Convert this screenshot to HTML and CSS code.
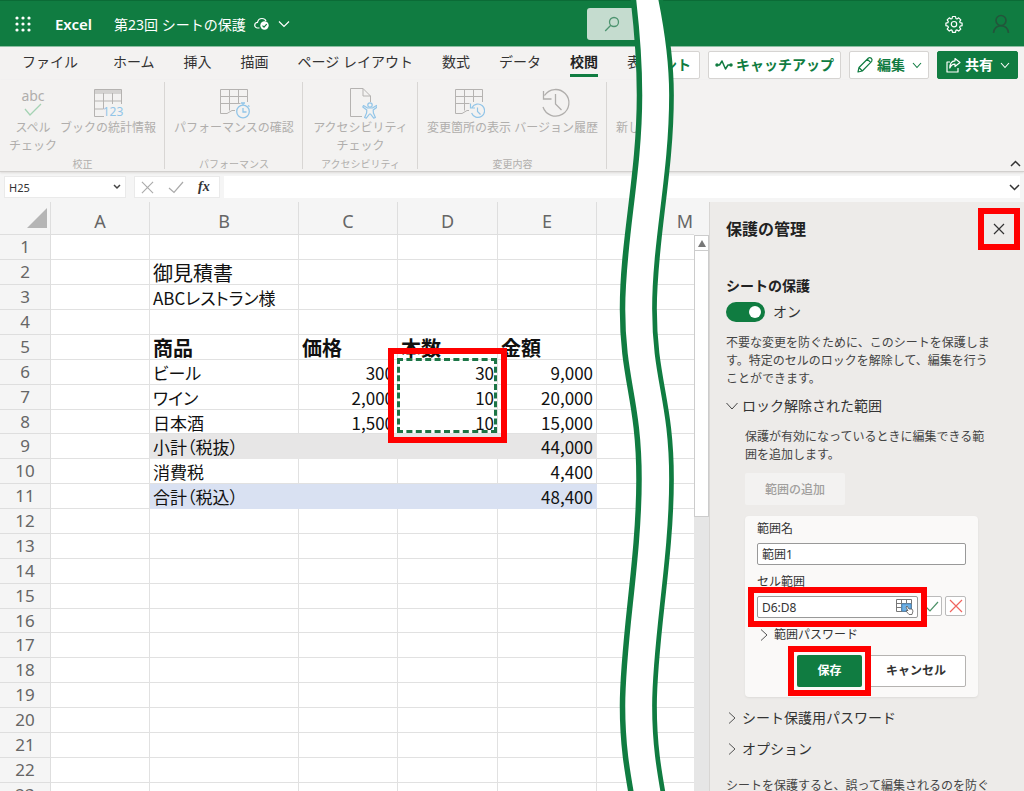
FILE: index.html
```html
<!DOCTYPE html>
<html lang="ja">
<head>
<meta charset="utf-8">
<title>第23回 シートの保護 - Excel</title>
<link rel="stylesheet" href="styles.css">
</head>
<body>
<div class="app">
  <header class="topbar">
    <div class="brand">
      <button class="plain" aria-label="アプリ起動ツール">
        <svg width="16" height="16" viewBox="0 0 16 16" fill="#fff"><circle cx="2" cy="2" r="1.6"/><circle cx="8" cy="2" r="1.6"/><circle cx="14" cy="2" r="1.6"/><circle cx="2" cy="8" r="1.6"/><circle cx="8" cy="8" r="1.6"/><circle cx="14" cy="8" r="1.6"/><circle cx="2" cy="14" r="1.6"/><circle cx="8" cy="14" r="1.6"/><circle cx="14" cy="14" r="1.6"/></svg>
      </button>
      <span class="appname">Excel</span>
      <button class="plain doc">
        <span>第23回 シートの保護</span>
        <svg width="16" height="14" viewBox="0 0 16 14" fill="none" stroke="#fff" stroke-width="1.2"><path d="M5.500 11H3.500a2.800 2.800 0 0 1 0-5.600C4 3 5.600 1.500 8 1.500c2 0 3.400 1 4 2.500"/><circle cx="10.500" cy="8.500" r="4.200" fill="#fff" stroke="none"/><path d="M8.500 8.600l1.500 1.500 2.700-3" stroke="#107c41"/></svg>
        <svg width="12" height="8" viewBox="0 0 12 8" fill="none" stroke="#fff" stroke-width="1.200"><path d="M1 1.500l5 5 5-5"/></svg>
      </button>
    </div>
    <button class="search" aria-label="検索">
      <svg width="16" height="16" viewBox="0 0 16 16" fill="none" stroke="#4e9470" stroke-width="1.300"><circle cx="10" cy="6" r="4.500"/><path d="M6.800 9.300L1.200 15"/></svg>
    </button>
    <div class="account">
      <button class="plain" aria-label="設定">
        <svg width="18" height="18" viewBox="0 0 18 18" fill="none" stroke="#fff" stroke-width="1.200" stroke-linejoin="round"><path d="M7.500 1.500h3l.4 2 1.100.5 1.700-1.200 2.100 2.100-1.100 1.700.4 1.100 2 .4v2.600l-2 .5-.5 1.100 1.200 1.700-2.100 2.100-1.700-1.200-1.100.5-.4 2h-3l-.4-2-1.100-.5-1.700 1.200-2.100-2.100 1.200-1.700-.5-1.100-2-.5V8.100l2-.4.4-1.100-1.100-1.700 2.100-2.100L6 4l1.100-.5z"/><circle cx="9" cy="9.200" r="2.700"/></svg>
      </button>
      <button class="plain" aria-label="アカウント">
        <svg width="18" height="20" viewBox="0 0 18 20" fill="none" stroke="#23553b" stroke-width="1.600"><circle cx="9" cy="6.500" r="5"/><path d="M1.500 19c.5-4.500 3.500-7.300 7.500-7.300s7 2.800 7.500 7.300"/></svg>
      </button>
    </div>
  </header>

  <div class="tabrow">
    <nav class="tabs">
      <a href="#">ファイル</a><a href="#">ホーム</a><a href="#">挿入</a><a href="#">描画</a><a href="#">ページ レイアウト</a><a href="#">数式</a><a href="#">データ</a><a href="#" class="on">校閲</a><a href="#">表</a>
    </nav>
    <div class="actions">
      <button class="act comment">ント</button>
      <button class="act">
        <svg width="18" height="12" viewBox="0 0 18 12" fill="none" stroke="#107c41" stroke-width="1.500" stroke-linejoin="round"><path d="M2 6h2.500L7 2l3.500 8L13 6h3"/><circle cx="2" cy="6" r="1" fill="#107c41"/><circle cx="16" cy="6" r="1" fill="#107c41"/></svg>
        <span>キャッチアップ</span>
      </button>
      <button class="act">
        <svg width="18" height="18" viewBox="0 0 18 18" fill="none" stroke="#107c41" stroke-width="1.200" stroke-linejoin="round"><path d="M2 16l1-4.500L12.500 2c1.800-1.300 4.500 1 3.200 3.300L6.300 15zM11.300 3.200l3.300 3.300M3 11.500l3.300 3.500"/></svg>
        <span>編集</span>
        <svg width="10" height="7" viewBox="0 0 10 7" fill="none" stroke="#107c41" stroke-width="1.100"><path d="M1 1l4 4.500L9 1"/></svg>
      </button>
      <button class="act share">
        <svg width="17" height="16" viewBox="0 0 17 16" fill="none" stroke="#fff" stroke-width="1.200" stroke-linejoin="round"><path d="M5 5H2v10h11v-4M10 1.500l5 4-5 4V7.200C7.500 7 6 8.500 4.800 11c0-4 2-7 5.200-7.200z"/></svg>
        <span>共有</span>
        <svg width="10" height="7" viewBox="0 0 10 7" fill="none" stroke="#fff" stroke-width="1.100"><path d="M1 1l4 4.500L9 1"/></svg>
      </button>
    </div>
  </div>

  <div class="ribbon">
    <section class="group g1">
      <div class="tools">
        <button class="tool" disabled>
          <svg width="32" height="32" viewBox="0 0 32 32"><text x="16" y="14" text-anchor="middle" class="abc">abc</text><path d="M8 22l5 6L24 17" fill="none" stroke="#a5d3b4" stroke-width="1.300"/></svg>
          <span>スペル<br>チェック</span>
        </button>
        <button class="tool" disabled>
          <svg width="32" height="32" viewBox="0 0 32 32" fill="none" stroke="#b5b3b1"><path d="M12 29.500H2.500v-27h27V17M2.500 6h27M2.500 14h27M2.500 22h9M11.500 6v16M20.500 6v11M2.500 4h27"/><text x="21" y="29" text-anchor="middle" class="n123">123</text></svg>
          <span>ブックの統計情報</span>
        </button>
      </div>
      <h3>校正</h3>
    </section>
    <section class="group g2">
      <div class="tools">
        <button class="tool" disabled>
          <svg width="32" height="32" viewBox="0 0 32 32" fill="none" stroke="#b5b3b1"><path d="M29.500 15V2.500h-27v24H9l5-3h3M2.500 9.500h27M2.500 16.500h20M11.500 2.500v21M20.500 2.500V17"/><g stroke="#92c5e8" stroke-width="1.300"><circle cx="25" cy="24.500" r="6.300"/><path d="M25 21v4h3.500M23 16h4M25 16v2M30 18.500l1.500 1"/></g></svg>
          <span>パフォーマンスの確認</span>
        </button>
      </div>
      <h3>パフォーマンス</h3>
    </section>
    <section class="group g3">
      <div class="tools">
        <button class="tool" disabled>
          <svg width="32" height="32" viewBox="0 0 32 32" fill="none" stroke="#b5b3b1"><path d="M17 29.500H5.500v-28H18l7.500 7.500v6M18 1.500V9h7.500"/><g stroke="#92c5e8" stroke-width="1.200" stroke-linejoin="round"><circle cx="25" cy="18" r="2.200"/><path d="M18.500 18.500l4 2.500h5l4-2.500.7 1.500-4 3 .2 3 2 4.500-1.700.7L25.500 27h-1l-3.200 4.200-1.700-.7 2-4.500.2-3-4-3z"/></g></svg>
          <span>アクセシビリティ<br>チェック</span>
        </button>
      </div>
      <h3>アクセシビリティ</h3>
    </section>
    <section class="group g4">
      <div class="tools">
        <button class="tool" disabled>
          <svg width="32" height="32" viewBox="0 0 32 32" fill="none" stroke="#b5b3b1"><path d="M29.500 15V2.500h-27v24H9l5-3h2M2.500 9.500h27M2.500 16.500h14M11.500 2.500v21M20.500 2.500V15"/><g stroke="#92c5e8" stroke-width="1.200"><path d="M19 20.500a6.700 6.700 0 1 1-.4 5.500M17.500 16.500v4.500H22M24.500 20.500v4l3 3"/></g></svg>
          <span>変更箇所の表示</span>
        </button>
        <button class="tool" disabled>
          <svg width="32" height="32" viewBox="0 0 32 32" fill="none" stroke="#b0aeac" stroke-width="1.300"><path d="M4.500 8.500A13.300 13.300 0 1 1 3 20M3.500 4v8h8M15.500 7v10l6 6"/></svg>
          <span>バージョン履歴</span>
        </button>
      </div>
      <h3>変更内容</h3>
    </section>
    <section class="group g5">
      <div class="tools"><button class="tool" disabled><svg width="24" height="32" viewBox="0 0 24 32"></svg><span>新し</span></button></div>
    </section>
    <button class="plain collapse" aria-label="リボンを折りたたむ">
      <svg width="11" height="7" viewBox="0 0 11 7" fill="none" stroke="#333" stroke-width="1.500"><path d="M1 6l4.500-4.500L10 6"/></svg>
    </button>
  </div>

  <div class="formulabar">
    <button class="namebox"><span>H25</span>
      <svg width="8" height="6" viewBox="0 0 8 6" fill="none" stroke="#444" stroke-width="1.500"><path d="M1 1l3 3 3-3"/></svg>
    </button>
    <div class="fxtools">
      <svg width="13" height="13" viewBox="0 0 14 14" fill="none" stroke="#aaa" stroke-width="1.200"><path d="M1 1l12 12M13 1L1 13"/></svg>
      <svg width="16" height="14" viewBox="0 0 16 14" fill="none" stroke="#aaa" stroke-width="1.200"><path d="M1 8l5 4.500L15 2"/></svg>
      <span class="fx">fx</span>
    </div>
    <div class="fxinput">
      <input type="text" aria-label="数式バー">
      <svg width="11" height="7" viewBox="0 0 11 7" fill="none" stroke="#333" stroke-width="1.500"><path d="M1 1l4.500 4.500L10 1"/></svg>
    </div>
  </div>

  <main class="work">
    <div class="sheet">
      <table class="grid">
        <colgroup><col class="w50"><col class="w99"><col class="w149"><col class="w99"><col class="w100"><col class="w99"><col></colgroup>
        <thead><tr><th class="corner"><svg width="20" height="20" viewBox="0 0 20 20"><path d="M20 0v20H0z" fill="#b5b5b5"/></svg></th><th>A</th><th>B</th><th>C</th><th>D</th><th>E</th><th class="last">M</th></tr></thead>
        <tbody>
          <tr><th>1</th><td></td><td></td><td></td><td></td><td></td><td></td></tr>
          <tr><th>2</th><td></td><td class="big">御見積書</td><td></td><td></td><td></td><td></td></tr>
          <tr><th>3</th><td></td><td>ABCレストラン様</td><td></td><td></td><td></td><td></td></tr>
          <tr><th>4</th><td></td><td></td><td></td><td></td><td></td><td></td></tr>
          <tr class="heads"><th>5</th><td></td><td>商品</td><td>価格</td><td>本数</td><td>金額</td><td></td></tr>
          <tr><th>6</th><td></td><td>ビール</td><td class="num">300</td><td class="num anchor">30<span class="mark range"></span><span class="ants"></span></td><td class="num">9,000</td><td></td></tr>
          <tr><th>7</th><td></td><td>ワイン</td><td class="num">2,000</td><td class="num">10</td><td class="num">20,000</td><td></td></tr>
          <tr><th>8</th><td></td><td>日本酒</td><td class="num">1,500</td><td class="num">10</td><td class="num">15,000</td><td></td></tr>
          <tr class="sub"><th>9</th><td></td><td>小計（税抜）</td><td></td><td></td><td class="num">44,000</td><td></td></tr>
          <tr><th>10</th><td></td><td>消費税</td><td></td><td></td><td class="num">4,400</td><td></td></tr>
          <tr class="total"><th>11</th><td></td><td>合計（税込）</td><td></td><td></td><td class="num">48,400</td><td></td></tr>
          <tr><th>12</th><td></td><td></td><td></td><td></td><td></td><td></td></tr>
          <tr><th>13</th><td></td><td></td><td></td><td></td><td></td><td></td></tr>
          <tr><th>14</th><td></td><td></td><td></td><td></td><td></td><td></td></tr>
          <tr><th>15</th><td></td><td></td><td></td><td></td><td></td><td></td></tr>
          <tr><th>16</th><td></td><td></td><td></td><td></td><td></td><td></td></tr>
          <tr><th>17</th><td></td><td></td><td></td><td></td><td></td><td></td></tr>
          <tr><th>18</th><td></td><td></td><td></td><td></td><td></td><td></td></tr>
          <tr><th>19</th><td></td><td></td><td></td><td></td><td></td><td></td></tr>
          <tr><th>20</th><td></td><td></td><td></td><td></td><td></td><td></td></tr>
          <tr><th>21</th><td></td><td></td><td></td><td></td><td></td><td></td></tr>
          <tr><th>22</th><td></td><td></td><td></td><td></td><td></td><td></td></tr>
          <tr><th>23</th><td></td><td></td><td></td><td></td><td></td><td></td></tr>
        </tbody>
      </table>
      <div class="scroll">
        <button class="up" aria-label="上へスクロール"><svg width="8" height="7" viewBox="0 0 8 7"><path d="M4 0l4 7H0z" fill="#777"/></svg></button>
        <div class="thumb"></div>
      </div>
    </div>

    <aside class="panel">
      <div class="panelhead">
        <h1>保護の管理</h1>
        <button class="plain close" aria-label="閉じる">
          <svg width="12" height="12" viewBox="0 0 12 12" fill="none" stroke="#333" stroke-width="1.200"><path d="M1 1l10 10M11 1L1 11"/></svg>
          <span class="mark"></span>
        </button>
      </div>
      <h2 id="protect">シートの保護</h2>
      <label class="switch"><input type="checkbox" role="switch" checked aria-describedby="protect"><span>オン</span></label>
      <p class="note">不要な変更を防ぐために、このシートを保護します。特定のセルのロックを解除して、編集を行うことができます。</p>
      <button class="plain fold first">
        <svg width="12" height="12" viewBox="0 0 12 12" fill="none" stroke="#444"><path d="M.5 3L6 9l5.500-6"/></svg><span>ロック解除された範囲</span>
      </button>
      <div class="ranges">
        <p class="note">保護が有効になっているときに編集できる範囲を追加します。</p>
        <button class="add" disabled>範囲の追加</button>
        <form class="card">
          <label for="rname">範囲名</label>
          <input id="rname" class="field" type="text" value="範囲1">
          <label for="rcells" class="second">セル範囲</label>
          <div class="cellrow">
            <div class="pick">
              <input id="rcells" class="field" type="text" value="D6:D8">
              <svg class="pickicon" width="18" height="16" viewBox="0 0 18 16" fill="none" stroke="#777"><path d="M.5.500h15v12H.5zM.5 4.500h15M.5 8.500h15M5.500.500v12M10.500.500v12"/><path d="M6 5h9v7H6z" fill="#6fb0e4" stroke="#4a90cc"/><path d="M10 8l1-1 2 3h3l1 2-1 3.500h-3l-3-3.500 1-1 1 1z" fill="#fff" stroke="#555" stroke-width=".8"/></svg>
              <span class="mark"></span>
            </div>
            <button type="button" class="mini" aria-label="確定"><svg width="14" height="14" viewBox="0 0 14 14" fill="none" stroke="#4d9269" stroke-width="1.200"><path d="M1 8l4 4 8-9"/></svg></button>
            <button type="button" class="mini" aria-label="取り消し"><svg width="16" height="16" viewBox="0 0 16 16" fill="none" stroke="#f0645f" stroke-width="1.200"><path d="M2 2l12 12M14 2L2 14"/></svg></button>
          </div>
          <button type="button" class="plain fold small">
            <svg width="10" height="12" viewBox="0 0 10 12" fill="none" stroke="#555"><path d="M2 .500L8 6l-6 5.500"/></svg><span>範囲パスワード</span>
          </button>
          <div class="buttons">
            <button type="button" class="save">保存<span class="mark"></span></button>
            <button type="button" class="cancel">キャンセル</button>
          </div>
        </form>
      </div>
      <button class="plain fold">
        <svg width="12" height="12" viewBox="0 0 12 12" fill="none" stroke="#555"><path d="M3 .500L9 6l-6 5.500"/></svg><span>シート保護用パスワード</span>
      </button>
      <button class="plain fold">
        <svg width="12" height="12" viewBox="0 0 12 12" fill="none" stroke="#555"><path d="M3 .500L9 6l-6 5.500"/></svg><span>オプション</span>
      </button>
      <p class="note tail">シートを保護すると、誤って編集されるのを防ぐことができます。</p>
    </aside>
  </main>

  <svg class="tear" width="80" height="800" viewBox="610 0 80 800" fill="none" stroke="#107c41">
    <path fill="#fff" stroke="none" d="M633 -4C637 30 639.500 60 639.500 95C639.500 175 622.500 240 622.500 309C622.500 380 639 400 639 479C639 560 622.500 640 622.500 706C622.500 745 627 770 633 804H665C659 770 654.500 745 654.500 706C654.500 640 671.500 560 671.500 479C671.500 400 654.500 380 654.500 309C654.500 240 671.500 175 671.500 95C671.500 60 667 30 660 -4Z"/>
    <path stroke-width="5.500" d="M633 -4C637 30 639.500 60 639.500 95C639.500 175 622.500 240 622.500 309C622.500 380 639 400 639 479C639 560 622.500 640 622.500 706C622.500 745 627 770 633 804"/>
    <path stroke-width="4.700" d="M660 -4C667 30 671.500 60 671.500 95C671.500 175 654.500 240 654.500 309C654.500 380 671.500 400 671.500 479C671.500 560 654.500 640 654.500 706C654.500 745 659 770 665 804"/>
  </svg>
</div>
</body>
</html>
```

FILE: styles.css
```css
* { box-sizing: border-box; }
body {
  margin: 0;
  font-family: "Noto Sans", "Noto Sans CJK JP", sans-serif;
  font-size: 14px;
  color: #333;
  background: #f3f2f1;
}
h1, h2, h3, p { margin: 0; }
button, input { font: inherit; color: inherit; }
svg { display: block; flex: none; }
.app {
  position: relative;
  display: flex;
  flex-direction: column;
  height: 100vh;
  overflow: hidden;
}
.plain { border: 0; padding: 0; background: none; }
.mark {
  position: absolute;
  inset: -9px;
  border: 6px solid #f00;
  z-index: 3;
  pointer-events: none;
}

/* title bar */
.topbar {
  display: flex;
  align-items: center;
  height: 47px;
  flex: none;
  background: #107c41;
  border-top: 1px solid #0b6b36;
  border-bottom: 1px solid #8dbfa3;
  color: #fff;
}
.brand {
  display: flex;
  align-items: center;
  flex: 0 0 587px;
  padding-left: 15px;
}
.appname { margin: 0 22px 0 24px; font-size: 15px; font-weight: 600; }
.doc { display: flex; align-items: center; gap: 8px; white-space: nowrap; }
.search {
  width: 60px;
  height: 32px;
  border: 0;
  border-radius: 3px;
  padding: 0 0 0 17px;
  background: #c5dccf;
}
.account {
  display: flex;
  align-items: center;
  gap: 29px;
  margin-left: auto;
  padding-right: 14px;
}

/* ribbon tabs */
.tabrow {
  display: flex;
  justify-content: space-between;
  flex: none;
  height: 33px;
}
.tabs {
  display: flex;
  gap: 29px;
  flex: none;
  padding-left: 22px;
}
.tabs a {
  position: relative;
  color: #333;
  text-decoration: none;
  white-space: nowrap;
  line-height: 30px;
}
.tabs a:first-child { margin-right: 6px; }
.tabs .on { font-weight: 700; color: #222; }
.tabs .on::after {
  content: "";
  position: absolute;
  left: 0;
  right: 0;
  top: 27px;
  height: 3px;
  background: #107c41;
}
.actions {
  display: flex;
  gap: 8px;
  flex: none;
  padding: 4px 6px 0 0;
}
.act {
  display: flex;
  align-items: center;
  gap: 3px;
  height: 28px;
  padding: 0 6px;
  border: 1px solid #d6d4d2;
  border-radius: 2px;
  background: #fff;
  color: #107c41;
  font-weight: 700;
  line-height: 20px;
  white-space: nowrap;
}
.act span + svg { margin-left: 4px; }
.comment { justify-content: flex-end; padding-right: 8px; }
.share { padding: 0 7px; background: #107c41; border-color: #107c41; color: #fff; }

/* ribbon */
.ribbon {
  position: relative;
  display: flex;
  flex: none;
  height: 92px;
  border-bottom: 1px solid #d2d0ce;
  box-shadow: 0 1px 2px #dddbd9;
}
.group {
  position: relative;
  display: flex;
  flex-direction: column;
  justify-content: space-between;
  align-items: center;
  padding-top: 7px;
  color: #b0aeac;
}
.group:not(.g5)::after {
  content: "";
  position: absolute;
  right: 0;
  top: 2px;
  bottom: 2px;
  width: 1px;
  background: #d8d6d4;
}
.g1 { width: 165px; }
.g2 { width: 138px; }
.g3 { width: 115px; }
.g4 { width: 189px; }
.g5 { width: 42px; }
.tools { display: flex; gap: 3px; }
.tool {
  display: flex;
  flex-direction: column;
  align-items: center;
  justify-content: flex-start;
  border: 0;
  padding: 0;
  background: none;
  color: #b0aeac;
  font-size: 12px;
  line-height: 18px;
  white-space: nowrap;
}
.group h3 { font-size: 10px; font-weight: 400; line-height: 14px; }
.abc { font: 14px "Noto Sans", sans-serif; fill: #b0aeac; }
.n123 { font: 12px "Noto Sans", sans-serif; fill: #92c5e8; stroke: none; }
.collapse { align-self: flex-end; margin: 0 3px 4px auto; }

/* formula bar */
.formulabar {
  display: flex;
  flex: none;
  height: 30px;
  padding: 4px 4px 4px;
  background: #f5f5f5;
  font-size: 12px;
}
.namebox {
  display: flex;
  justify-content: space-between;
  align-items: center;
  width: 122px;
  padding: 0 4px;
  border: 1px solid #eaeaea;
  background: #fff;
  font-size: 11px;
}
.fxtools {
  display: flex;
  align-items: center;
  gap: 14px;
  margin: 0 4px 0 8px;
  width: 86px;
  padding-left: 6px;
  border: 1px solid #eaeaea;
  background: #fff;
}
.fx { font: italic bold 14px "Liberation Serif", serif; }
.fxinput {
  display: flex;
  align-items: center;
  flex: 1;
  min-width: 0;
  background: #fff;
}
.fxinput input { flex: 1; min-width: 0; border: 0; padding: 0 6px; background: none; }

/* worksheet */
.work { display: flex; flex: 1; min-height: 0; }
.sheet { display: flex; flex: 1; min-width: 0; overflow: hidden; background: #f5f5f5; }
.grid {
  flex: 1;
  align-self: flex-start;
  min-width: 0;
  table-layout: fixed;
  border-spacing: 0;
  background: #fff;
  font-family: "Noto Sans CJK JP", sans-serif;
  font-size: 17px;
  line-height: 22px;
  color: #111;
}
.w50 { width: 50px; }
.w99 { width: 99px; }
.w100 { width: 100px; }
.w149 { width: 149px; }
.grid th {
  padding: 0;
  background: #f5f5f5;
  border-right: 1px solid #dedede;
  border-bottom: 1px solid #dedede;
  color: #666;
  font-family: "Noto Sans", sans-serif;
  font-weight: 400;
}
.grid thead th { height: 33px; padding-top: 6px; font-size: 18px; }
.grid thead .last { text-align: right; border-right: 0; padding-right: 1px; }
.grid .corner { padding: 0 3px 1px 27px; }
.grid td {
  height: 25px;
  padding: 1px 4px 0 3px;
  border-right: 1px solid #e1e1e1;
  border-bottom: 1px solid #e1e1e1;
  white-space: nowrap;
  font-feature-settings: "palt";
}
.grid td:last-child { border-right: 0; }
.grid tbody tr:nth-child(8n) td { height: 24px; }
.grid tbody tr:nth-child(8n) { line-height: 21px; }
.grid .num { padding-right: 3px; text-align: right; }
.grid .big { font-size: 20px; }
.heads td { font-size: 20px; font-weight: 700; }
.sub td:nth-child(n+3):nth-child(-n+6) { background: #e7e6e6; border-color: #e7e6e6; }
.total td:nth-child(n+3):nth-child(-n+6) { background: #d9e1f2; border-color: #d9e1f2; }
.anchor { position: relative; }
.range { inset: -12px auto auto -10px; width: 119px; height: 95px; }
.ants {
  position: absolute;
  top: -2px;
  left: -1px;
  width: 100px;
  height: 75px;
  border: 3px dashed #1c7546;
  z-index: 2;
}
.scroll {
  display: flex;
  flex-direction: column;
  width: 15px;
  flex: none;
  margin-top: 33px;
  background: #e6e6e6;
}
.up {
  display: flex;
  align-items: center;
  justify-content: center;
  height: 16px;
  padding: 0;
  border: 1px solid #ccc;
  background: #fff;
}
.thumb { height: 266px; border: 1px solid #ccc; border-top: 0; background: #fff; }

/* side panel */
.panel {
  width: 315px;
  flex: none;
  padding: 6px 4px 0 16px;
  overflow: hidden;
  background: #edebe9;
  border-left: 1px solid #d8d6d4;
}
.panelhead { display: flex; justify-content: space-between; align-items: center; }
.panel h1 { font-size: 16px; line-height: 24px; color: #222; }
.panel h2 { margin-top: 26px; font-size: 14px; line-height: 20px; color: #222; }
.close {
  position: relative;
  display: grid;
  place-items: center;
  width: 42px;
  height: 42px;
}
.close .mark { inset: 0; }
.switch { display: flex; align-items: center; gap: 8px; margin-top: 6px; line-height: 20px; }
.switch input {
  appearance: none;
  width: 39px;
  height: 20px;
  margin: 0;
  padding: 4px;
  border-radius: 10px;
  background: #107c41;
}
.switch input::before {
  content: "";
  display: block;
  width: 12px;
  height: 12px;
  margin-left: auto;
  border-radius: 50%;
  background: #fff;
}
.note { width: 266px; margin-top: 12px; font-size: 12px; line-height: 18px; color: #444; }
.fold { display: flex; align-items: center; gap: 4px; line-height: 20px; margin-top: 11px; }
.fold.first { margin-top: 8px; }
.tail { margin-top: 18px; }
.ranges { margin: 0 0 9px 19px; width: 233px; }
.ranges .note { width: 240px; }
.add {
  display: block;
  width: 100px;
  height: 32px;
  margin: 9px 0 11px;
  border: 0;
  border-radius: 2px;
  background: #f3f2f1;
  color: #a19f9d;
  font-size: 12px;
  font-weight: 500;
}
.card {
  padding: 4px 12px 10px;
  border-radius: 4px;
  background: #faf9f8;
  box-shadow: 0 1px 2px #dddbd9;
  font-size: 12px;
  line-height: 18px;
}
.card label { display: block; margin-bottom: 5px; }
.card .second { margin: 8px 0 5px; }
.field {
  display: block;
  width: 100%;
  height: 22px;
  padding: 0 4px;
  border: 1px solid #999;
  border-radius: 2px;
  background: #fff;
  font-size: 12px;
}
.cellrow { display: flex; gap: 3px; }
.pick { position: relative; flex: 1; }
.pickicon { position: absolute; right: 4px; top: 3px; }
.mini {
  display: grid;
  place-items: center;
  width: 21px;
  height: 20px;
  padding: 0;
  border: 1px solid #bbb;
  border-radius: 2px;
  background: #fff;
}
.fold.small { gap: 5px; margin: 8px 0 0 2px; line-height: 18px; }
.buttons { display: flex; justify-content: flex-end; gap: 4px; margin-top: 11px; }
.save, .cancel {
  position: relative;
  height: 32px;
  padding: 0;
  border-radius: 2px;
  font-weight: 700;
}
.save { width: 65px; border: 0; background: #107c41; color: #fff; z-index: 1; }
.cancel { width: 100px; border: 1px solid #b5b3b1; background: #fff; z-index: 0; }

/* torn strip between the two halves of the window */
.tear { position: absolute; top: 0; left: 610px; z-index: 5; }
```
